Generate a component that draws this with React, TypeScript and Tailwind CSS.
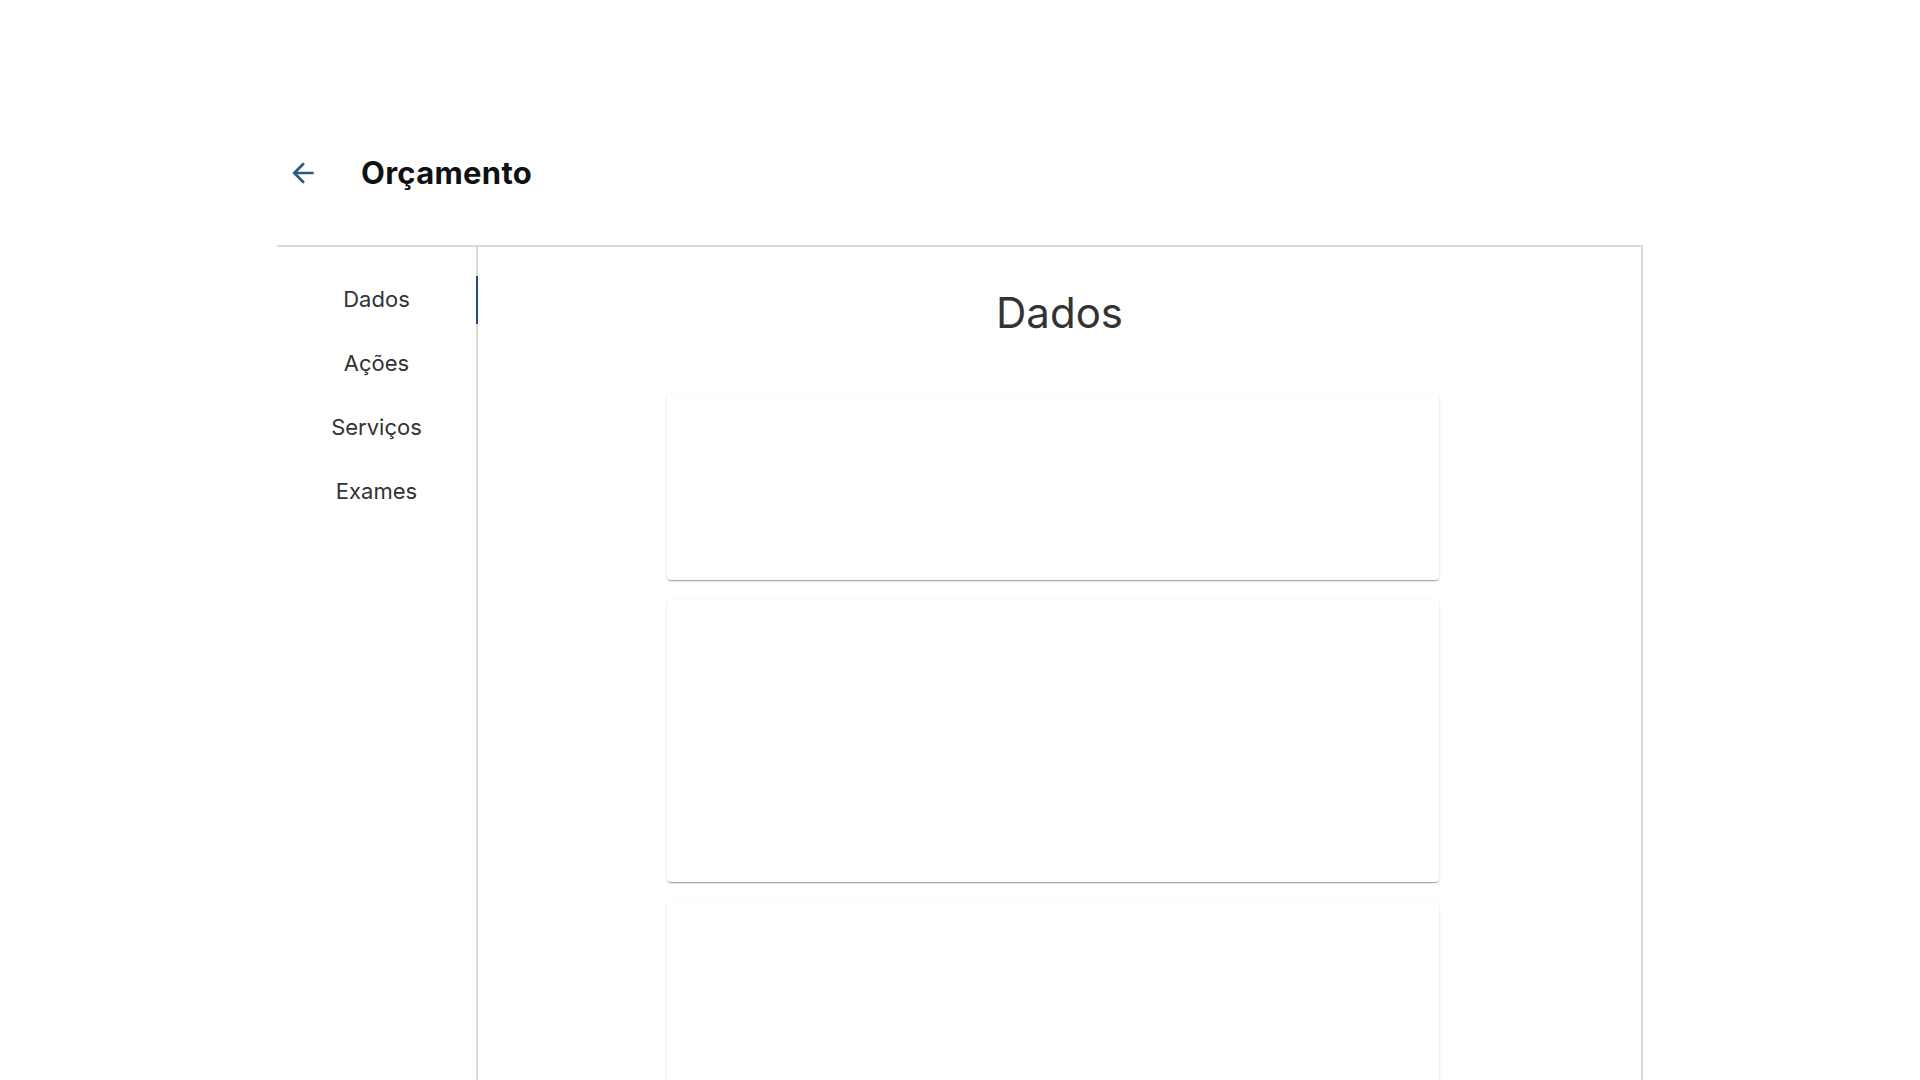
import React from "react";

const items = ["Dados", "Ações", "Serviços", "Exames"];

export default function App() {
  return (
    <div className="min-h-screen bg-white" style={{ fontFamily: "Inter, 'Noto Sans', sans-serif" }}>
      <div className="w-[1366px] mx-auto pt-[141px]">
        <header className="h-[64px] flex items-center">
          <button className="ml-[10px] w-[32px] h-[32px] flex items-center justify-center text-[#2b5a86]">
            <svg width="32" height="32" viewBox="0 0 24 24" fill="currentColor">
              <path d="M20 11H7.83l5.59-5.59L12 4l-8 8 8 8 1.41-1.41L7.83 13H20v-2z" />
            </svg>
          </button>
          <h1 className="ml-[42px] text-[31px] font-bold text-[#111] tracking-[0.3px]">Orçamento</h1>
        </header>
        <div className="mt-[40px] flex border-t-2 border-r-2 border-[#dadada] min-h-[900px]">
          <nav className="w-[201px] shrink-0 border-r-2 border-[#dadada] pt-[28px] flex flex-col gap-[16px]">
            {items.map((it, i) => (
              <div key={it} className="relative h-[48px] flex items-center justify-center text-[22px] text-[#333]">
                {it}
                {i === 0 && <span className="absolute right-[-2px] top-[1px] w-[2px] h-[48px] bg-[#1d4e7e]" />}
              </div>
            ))}
          </nav>
          <main className="flex-1">
            <h2 className="text-center text-[42px] leading-[48px] text-[#333] mt-[42px]">Dados</h2>
            <div className="pl-[189px] mt-[57px] flex flex-col gap-[20px]">
              <div className="w-[772px] h-[186px] bg-white rounded-[4px] shadow-[0_2px_1px_-1px_rgba(0,0,0,0.2),0_1px_1px_0_rgba(0,0,0,0.14),0_1px_3px_0_rgba(0,0,0,0.12)]" />
              <div className="w-[772px] h-[282px] bg-white rounded-[4px] shadow-[0_2px_1px_-1px_rgba(0,0,0,0.2),0_1px_1px_0_rgba(0,0,0,0.14),0_1px_3px_0_rgba(0,0,0,0.12)]" />
              <div className="w-[772px] h-[282px] bg-white rounded-[4px] shadow-[0_2px_1px_-1px_rgba(0,0,0,0.2),0_1px_1px_0_rgba(0,0,0,0.14),0_1px_3px_0_rgba(0,0,0,0.12)]" />
            </div>
          </main>
        </div>
      </div>
    </div>
  );
}
